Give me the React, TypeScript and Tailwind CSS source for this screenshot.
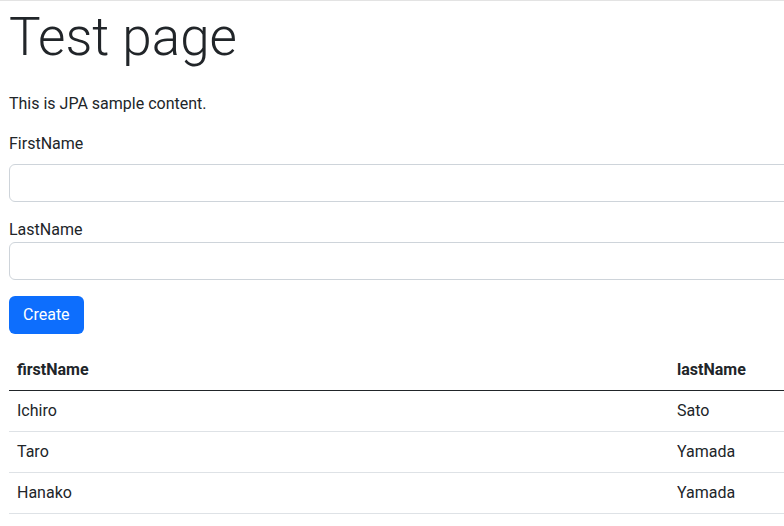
import React from "react";

const people = [
  { firstName: "Ichiro", lastName: "Sato" },
  { firstName: "Taro", lastName: "Yamada" },
  { firstName: "Hanako", lastName: "Yamada" },
];

const App = () => {
  return (
    <div className="w-full min-h-screen overflow-hidden bg-white border-t border-[#e3e3e3] text-[#212529] text-base font-['Roboto','Liberation_Sans',sans-serif]">
      <div className="w-[1100px] pl-[9px]">
        <h1 className="text-[53px] font-light leading-[67px] pt-[3px] mb-[21px]">Test page</h1>
        <p className="leading-6 mb-4">This is JPA sample content.</p>

        <label className="block leading-6 mb-2">FirstName</label>
        <input type="text" className="block w-full h-[38px] px-3 border border-[#ced4da] rounded-[6px] mb-4 outline-none" />

        <label className="block leading-6">LastName</label>
        <input type="text" className="block w-full h-[38px] px-3 border border-[#ced4da] rounded-[6px] mb-4 outline-none" />

        <button className="h-[38px] px-[14px] bg-[#0d6efd] text-white rounded-[6px] leading-6">Create</button>

        <table className="w-full mt-4 text-left border-collapse">
          <thead>
            <tr className="border-b border-[#212529]">
              <th className="w-[660px] px-2 h-10 font-bold">firstName</th>
              <th className="px-2 h-10 font-bold">lastName</th>
            </tr>
          </thead>
          <tbody>
            {people.map((it, key) => (
              <tr key={key} className="border-b border-[#dee2e6]">
                <td className="px-2 h-[41px]">{it.firstName}</td>
                <td className="px-2 h-[41px]">{it.lastName}</td>
              </tr>
            ))}
          </tbody>
        </table>
      </div>
    </div>
  );
};

export default App;
